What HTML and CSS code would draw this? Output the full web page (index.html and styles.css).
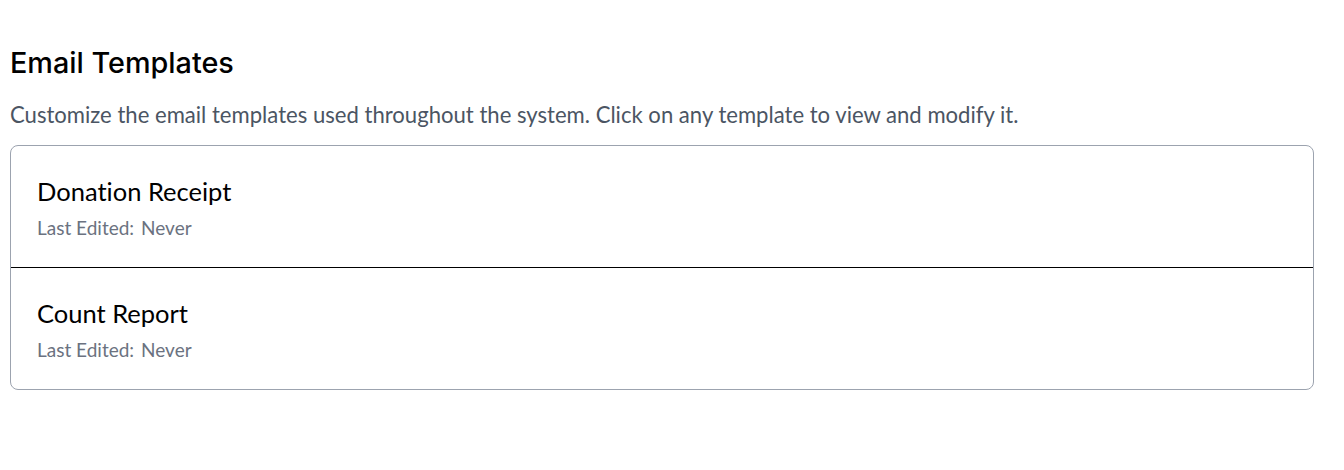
FILE: index.html
```html
<!DOCTYPE html>
<html>
<head>
<meta charset="utf-8">
<link rel="stylesheet" href="styles.css">
</head>
<body>
<div class="page">
  <h1 class="title">Email Templates</h1>
  <p class="desc">Customize the email templates used throughout the system. Click on any template to view and modify it.</p>
  <div class="list">
    <div class="item">
      <div class="item-name">Donation Receipt</div>
      <div class="item-meta"><span>Last Edited:</span><span>Never</span></div>
    </div>
    <div class="item">
      <div class="item-name">Count Report</div>
      <div class="item-meta"><span>Last Edited:</span><span>Never</span></div>
    </div>
  </div>
</div>
</body>
</html>
```
FILE: styles.css
```css
html, body { margin: 0; padding: 0; background: #fff; }
.page { padding: 46px 30px 0 10px; }
.title {
  margin: 0;
  font-family: Inter, sans-serif;
  font-weight: 500;
  font-size: 28.8px;
  line-height: 34px;
  color: #000;
}
.desc {
  margin: 20px 0 15px;
  font-family: Lato, sans-serif;
  font-size: 22.1px;
  line-height: 30px;
  color: #4b5563;
}
.list {
  border: 1px solid #9ca3af;
  border-radius: 8px;
}
.item {
  height: 121px;
  box-sizing: border-box;
  padding: 30px 26px 0;
  font-variant-ligatures: none;
}
.item + .item { border-top: 1px solid #000; height: 122px; }
.item-name {
  font-family: Lato, sans-serif;
  font-size: 25.5px;
  line-height: 30px;
  color: #000;
}
.item-meta {
  margin-top: 10px;
  display: flex;
  gap: 7px;
  font-family: Lato, sans-serif;
  font-size: 19px;
  line-height: 24px;
  color: #6b7280;
}
```
